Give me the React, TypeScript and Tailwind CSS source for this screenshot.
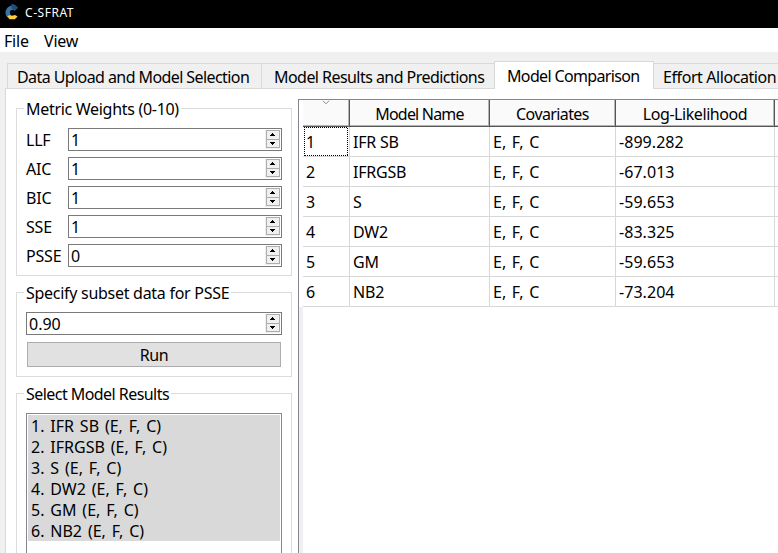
import React from "react";

function Spin({ value, full }: { value: string; full?: boolean }) {
  return (
    <div
      className={
        "flex h-[23px] items-start justify-between border border-[#7a7a7a] bg-white " +
        (full ? "w-[256px]" : "w-[214px]")
      }
    >
      <span className="h-[21px] pl-[2px] leading-[22px]">{value}</span>
      <svg className="mt-px mr-px block" width="15" height="19" shapeRendering="crispEdges">
        <rect width="15" height="19" fill="#f0f0f0" />
        <rect x="1.5" y="0.5" width="13" height="17" fill="#f0f0f0" stroke="#adadad" />
        <path d="M1 9.5h14" stroke="#adadad" />
        <path d="M7 3h1v1h1v1h1v1h-5v-1h1v-1h1zM5 12h5v1h-1v1h-1v1h-1v-1h-1v-1h-1z" fill="#000" />
      </svg>
    </div>
  );
}

function Group({
  title,
  className,
  track,
  children,
}: {
  title: string;
  className: string;
  track: string;
  children: React.ReactNode;
}) {
  return (
    <section className={"w-[276px] shrink-0 border border-[#dcdcdc] " + className}>
      <h2 className={"-mt-[12px] ml-[7px] h-[22px] w-fit bg-white px-[2px] leading-[24px] " + track}>{title}</h2>
      {children}
    </section>
  );
}

const weights = [
  ["LLF", "1"],
  ["AIC", "1"],
  ["BIC", "1"],
  ["SSE", "1"],
  ["PSSE", "0"],
];

const rows = [
  ["IFR SB", "-899.282"],
  ["IFRGSB", "-67.013"],
  ["S", "-59.653"],
  ["DW2", "-83.325"],
  ["GM", "-59.653"],
  ["NB2", "-73.204"],
];

const headCell =
  "h-[27px] border-r border-b border-[#555555] bg-[#fafafa] shadow-[inset_-1px_-1px_0_#b5b5b5] text-center leading-[29px]";
const cell = "h-[30px] border-r border-b border-[#d8d8d8] pl-[3px] leading-[30px]";

export default function App() {
  return (
    <div className="flex h-[553px] w-[778px] flex-col overflow-hidden bg-[#f0f0f0] font-['Noto_Sans',sans-serif] text-[16px] whitespace-pre text-black">
      <header className="flex h-[28px] shrink-0 bg-black text-white">
        <svg className="mt-[3px] ml-[3px]" width="17" height="18" viewBox="0 0 17 18">
          <path d="M13.2 6.2A4.8 4.8 0 1 0 6 13" fill="none" stroke="#3674a8" strokeWidth="4.4" />
          <path d="M8.5 1A7 7 0 0 1 14.8 5L11.5 7.3A4 4 0 0 0 8.5 5.4z" fill="#1f4e79" />
          <path d="M4.2 13.2L7 12l2 .8 3-.8 2.6 1.6-2.8 2.6H6.5z" fill="#ffcb3a" />
        </svg>
        <span className="ml-[5px] text-[12px] leading-[26px] tracking-[0.55px]">C-SFRAT</span>
      </header>
      <nav className="flex h-[24px] shrink-0 bg-white pl-[4px] leading-[26px] tracking-[-0.2px]">
        <span className="w-[40px]">File</span>
        <span>View</span>
      </nav>
      <div className="flex h-[36px] shrink-0 items-end pl-[7px]">
        <div className="h-[25px] w-[254px] shrink-0 border-t border-l border-[#d9d9d9] pl-[9px] leading-[27px] tracking-[-0.58px]">
          Data Upload and Model Selection
        </div>
        <div className="h-[25px] w-[233px] shrink-0 border-t border-l border-[#d9d9d9] pl-[12px] leading-[27px] tracking-[-0.55px]">
          Model Results and Predictions
        </div>
        <div className="relative -mb-px h-[28px] w-[160px] shrink-0 border-x border-t border-[#d9d9d9] bg-white pl-[12px] leading-[29px] tracking-[-0.65px]">
          Model Comparison
        </div>
        <div className="h-[25px] w-[140px] shrink-0 border-t border-[#d9d9d9] pl-[9px] leading-[27px] tracking-[-0.42px]">
          Effort Allocation
        </div>
      </div>
      <main className="ml-[5px] flex h-[465px] w-[773px] border-t border-l border-[#d9d9d9] bg-white">
        <aside className="flex w-[292px] flex-col pt-[19px] pl-[10px]">
          <Group title="Metric Weights (0-10)" className="h-[168px]" track="tracking-[-0.3px]">
            <div className="flex flex-col gap-[6px] pt-[9px] pl-[9px]">
              {weights.map(([k, v]) => (
                <div key={k} className="flex h-[23px]">
                  <span className="w-[42px] leading-[24px] tracking-[-0.2px]">{k}</span>
                  <Spin value={v} />
                </div>
              ))}
            </div>
          </Group>
          <Group title="Specify subset data for PSSE" className="mt-[16px] h-[85px]" track="tracking-[-0.28px]">
            <div className="flex flex-col gap-[7px] pt-[9px] pl-[9px]">
              <Spin value="0.90" full />
              <button className="ml-px h-[25px] w-[254px] border border-[#adadad] bg-[#e1e1e1] leading-[24px] tracking-[-0.4px]">
                Run
              </button>
            </div>
          </Group>
          <Group title="Select Model Results" className="mt-[16px] h-[200px]" track="tracking-[-0.55px]">
            <div className="mt-[9px] ml-[9px] h-[170px] w-[256px] border border-[#828790] p-px">
              {rows.map(([n], i) => (
                <div key={n} className="h-[21px] bg-[#d9d9d9] pl-[3px] leading-[23px] [word-spacing:1.7px]">
                  {i + 1}. {n} (E, F, C)
                </div>
              ))}
            </div>
          </Group>
        </aside>
        <section className="mt-[10px] flex w-[480px] border-t border-l border-[#828790]">
          <div className="w-[4px] shrink-0 bg-[#f0f0f0]">
            <div className="h-[207px] bg-white" />
          </div>
          <div className="grid shrink-0 auto-rows-min grid-cols-[47px_140px_126px_159px_10px]">
            <div className={headCell}>
              <svg className="mx-auto block" width="8" height="5" viewBox="0 0 8 5">
                <path d="M1 .8L4 3.8 7 .8" fill="none" stroke="#888" />
              </svg>
            </div>
            <div className={headCell + " tracking-[-0.8px]"}>Model Name</div>
            <div className={headCell + " tracking-[-0.6px]"}>Covariates</div>
            <div className={headCell + " tracking-[-0.43px]"}>Log-Likelihood</div>
            <div className={headCell} />
            {rows.map(([n, v], i) => (
              <React.Fragment key={n}>
                <div className={cell + " relative"}>
                  {i + 1}
                  {i === 0 && (
                    <svg
                      className="absolute top-0 left-px"
                      width="44"
                      height="29"
                      shapeRendering="crispEdges"
                      stroke="#000"
                      strokeDasharray="1 1"
                    >
                      <path d="M0 .5h44M1 28.5h43M.5 0v29M43.5 1v28" />
                    </svg>
                  )}
                </div>
                <div className={cell + " tracking-[-0.2px]"}>{n}</div>
                <div className={cell + " [word-spacing:1.5px]"}>E, F, C</div>
                <div className={cell + " tracking-[0.05px]"}>{v}</div>
                <div className={cell} />
              </React.Fragment>
            ))}
          </div>
        </section>
      </main>
    </div>
  );
}
